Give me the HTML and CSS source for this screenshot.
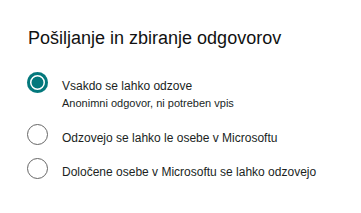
FILE: index.html
```html
<!DOCTYPE html>
<html lang="sl">
<head>
    <meta charset="UTF-8">
    <title>Pošiljanje in zbiranje odgovorov</title>
    <link rel="stylesheet" href="styles.css">
</head>
<body>
<main class="panel">
    <h1 class="title">Pošiljanje in zbiranje odgovorov</h1>
    <div class="options">
        <label class="option">
            <span class="radio checked"></span>
            <span class="text">
                <span class="label">Vsakdo se lahko odzove</span>
                <span class="hint">Anonimni odgovor, ni potreben vpis</span>
            </span>
        </label>
        <label class="option">
            <span class="radio"></span>
            <span class="text">
                <span class="label">Odzovejo se lahko le osebe v Microsoftu</span>
            </span>
        </label>
        <label class="option">
            <span class="radio"></span>
            <span class="text">
                <span class="label">Določene osebe v Microsoftu se lahko odzovejo</span>
            </span>
        </label>
    </div>
</main>
</body>
</html>
```

FILE: styles.css
```css
* {
  margin: 0;
  padding: 0;
  box-sizing: border-box;
}

body {
  background-color: #fff;
  font-family: "Liberation Sans", Arial, sans-serif;
  color: #201f1e;
}

.panel {
  padding: 26px 0 0 28px;
}

.title {
  font-size: 18px;
  font-weight: 400;
  line-height: 24px;
  color: #111;
}

.options {
  margin-top: 22px;
  display: flex;
  flex-direction: column;
  gap: 12px;
}

.option {
  display: flex;
  align-items: flex-start;
  gap: 14px;
  margin-left: -1px;
}

.radio {
  flex: none;
  width: 21px;
  height: 21px;
  border-radius: 50%;
  border: 1.5px solid #666;
  background-color: #fff;
}

.radio.checked {
  border: none;
  background-color: #03787c;
  box-shadow: inset 0 0 0 3px #03787c, inset 0 0 0 4.5px #fff;
}

.text {
  display: flex;
  flex-direction: column;
  padding-top: 6px;
}

.label {
  font-size: 12px;
  line-height: 16px;
}

.hint {
  margin-top: 1px;
  font-size: 11px;
  line-height: 17px;
}
```
